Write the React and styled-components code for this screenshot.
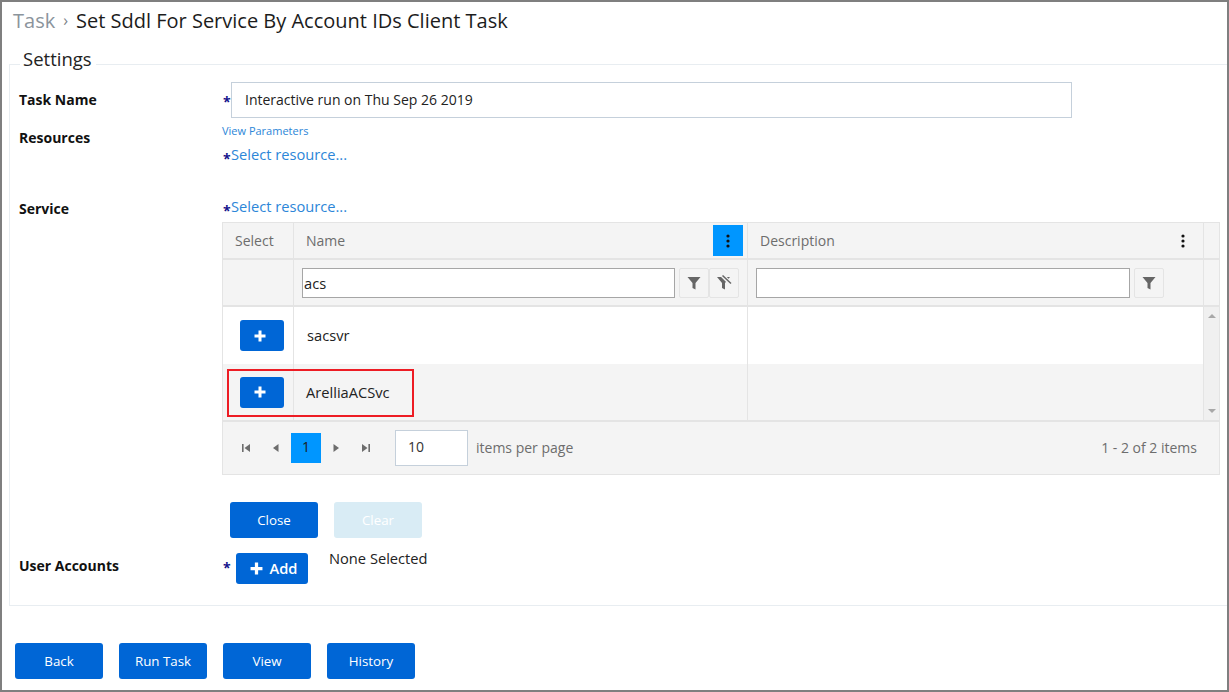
import React from "react";
import styled, { createGlobalStyle } from "styled-components";

const GlobalStyle = createGlobalStyle`
  html, body {
    margin: 0;
    padding: 0;
    background: #fff;
    font-family: "Open Sans", "Liberation Sans", sans-serif;
  }
`;

const Frame = styled.div`
  width: 1229px;
  height: 692px;
  box-sizing: border-box;
  border: 2px solid #7f7f7f;
  overflow: hidden;
  color: #1c1c1c;
`;

const TitleBar = styled.div`
  display: flex;
  align-items: center;
  height: 36px;
  padding-left: 11px;
  font-size: 20px;
`;

const Crumb = styled.span`
  color: #8b949c;
`;

const CrumbSep = styled.span`
  color: #7b8288;
  font-size: 16px;
  margin: 0 8px 0 8px;
`;

const Settings = styled.fieldset`
  margin: 20px 0 0 7px;
  padding: 0 9px 21px 9px;
  width: 1218px;
  height: 548px;
  box-sizing: border-box;
  border: 1px solid #e8edf1;
  border-right: none;
`;

const SettingsTitle = styled.legend`
  margin-left: 1px;
  padding: 0 4px 0 3px;
  height: 12px;
  font-size: 18.5px;
  line-height: 12px;
  color: #222;
  transform: translateY(-5px);
`;

const FormRow = styled.div`
  display: grid;
  grid-template-columns: 203px 1fr;
  margin-top: ${(p) => p.$top || 0}px;
  height: ${(p) => (p.$height ? p.$height + "px" : "auto")};
`;

const Label = styled.label`
  font-size: 14px;
  font-weight: 700;
  line-height: 19px;
  padding-top: ${(p) => p.$pad || 0}px;
  color: #111;
`;

const Star = styled.span`
  color: #14148c;
  font-size: 14px;
  font-weight: 700;
  line-height: 16px;
  display: inline-block;
  width: ${(p) => p.$w || 9}px;
  padding-left: 1px;
  box-sizing: border-box;
  transform: translateY(${(p) => p.$shift || 0}px);
`;

const NameLine = styled.div`
  display: flex;
  align-items: center;
`;

const TextBox = styled.div`
  width: 841px;
  height: 36px;
  box-sizing: border-box;
  border: 1px solid #c5d0db;
  padding-left: 13px;
  font-size: 14px;
  line-height: 34px;
  color: #222;
`;

const SmallLink = styled.a`
  display: block;
  font-size: 11px;
  line-height: 14px;
  color: #2c86d8;
  margin-top: 6px;
`;

const ResourceLine = styled.div`
  display: flex;
  align-items: center;
  height: 18px;
  margin-top: ${(p) => p.$top || 0}px;
`;

const ResourceLink = styled.a`
  font-size: 14.67px;
  line-height: 18px;
  color: #2c86d8;
`;

const Grid = styled.div`
  position: relative;
  width: 998px;
  height: 253px;
  margin-top: 7px;
  box-sizing: border-box;
  border: 1px solid #e4e4e4;
  background: #f4f4f4;
`;

const GridRow = styled.div`
  display: grid;
  grid-template-columns: 71px 454px 456px 15px;
  height: ${(p) => p.$height}px;
  box-sizing: border-box;
  border-bottom: ${(p) => (p.$line ? "2px solid #e4e4e4" : "none")};
  background: ${(p) => p.$bg || "#f4f4f4"};
`;

const Cell = styled.div`
  display: flex;
  align-items: center;
  box-sizing: border-box;
  border-right: 1px solid #e4e4e4;
  padding-left: ${(p) => p.$pad || 0}px;
  padding-bottom: ${(p) => p.$lift || 0}px;
  font-size: ${(p) => p.$size || 14.67}px;
  color: ${(p) => p.$color || "#222"};
`;

const HeadText = styled.span`
  flex: 1;
`;

const MenuButton = styled.button`
  width: 30px;
  height: 31px;
  margin-right: ${(p) => p.$right || 4}px;
  border: none;
  padding: 0;
  display: flex;
  align-items: center;
  justify-content: center;
  background: ${(p) => (p.$active ? "#0096ff" : "transparent")};
`;

const FilterInput = styled.div`
  width: ${(p) => p.$w}px;
  height: 30px;
  box-sizing: border-box;
  border: 1px solid #a6a6a6;
  background: #fff;
  font-size: 14.67px;
  line-height: 28px;
  padding-left: 1px;
  color: #222;
`;

const FilterButton = styled.button`
  width: 30px;
  height: 30px;
  margin-left: ${(p) => p.$gap || 0}px;
  box-sizing: border-box;
  padding: 0;
  border: 1px solid #e4e4e4;
  border-radius: 2px;
  background: #f4f4f4;
  display: flex;
  align-items: center;
  justify-content: center;
`;

const ScrollTrack = styled.div`
  display: flex;
  align-items: ${(p) => (p.$bottom ? "flex-end" : "flex-start")};
  justify-content: center;
  padding: ${(p) => (p.$bottom ? "0 0 6px 0" : "6px 0 0 0")};
  background: #f0f0f0;
`;

const PlusButton = styled.button`
  width: 44px;
  height: 31px;
  border: none;
  padding: 0 4px 0 0;
  border-radius: 3px;
  background: #0066d6;
  display: flex;
  align-items: center;
  justify-content: center;
`;

const Pager = styled.div`
  display: flex;
  align-items: center;
  height: 52px;
  padding-left: 8px;
  padding-right: 22px;
  font-size: 14px;
  color: #6d6d6d;
`;

const PageIcon = styled.span`
  width: 30px;
  height: 30px;
  display: flex;
  align-items: center;
  justify-content: center;
`;

const PageNumber = styled.span`
  width: 30px;
  height: 30px;
  background: #0096ff;
  color: #1c1c1c;
  text-align: center;
  line-height: 28px;
`;

const PageSize = styled.div`
  width: 73px;
  height: 36px;
  margin-left: 14px;
  box-sizing: border-box;
  border: 1px solid #c5d0db;
  background: #fff;
  padding-left: 12px;
  line-height: 32px;
  color: #333;
`;

const PagerText = styled.span`
  margin-left: 8px;
  padding-bottom: 2px;
`;

const PagerCount = styled.span`
  margin-left: auto;
  padding-bottom: 2px;
`;

const Highlight = styled.div`
  position: absolute;
  left: 4px;
  top: 146px;
  width: 187px;
  height: 48px;
  box-sizing: border-box;
  border: 2px solid #ed1c24;
`;

const ActionRow = styled.div`
  display: flex;
  gap: ${(p) => p.$gap}px;
  margin-top: ${(p) => p.$top}px;
  margin-left: ${(p) => p.$left}px;
`;

const ActionButton = styled.button`
  width: 88px;
  height: 36px;
  border: none;
  border-radius: 3px;
  padding: 0;
  font-family: inherit;
  font-size: 13.33px;
  font-weight: 400;
  color: #fff;
  background: ${(p) => (p.$disabled ? "#d9ecf5" : "#0066d6")};
`;

const AddLine = styled.div`
  display: flex;
  align-items: flex-start;
`;

const AddButton = styled.button`
  width: 72px;
  height: 31px;
  border: none;
  border-radius: 3px;
  padding: 0 0 0 3px;
  display: flex;
  align-items: center;
  justify-content: center;
  gap: 7px;
  background: #0066d6;
  color: #fff;
  font-family: inherit;
  font-size: 14.67px;
  font-weight: 600;
`;

const AddText = styled.span`
  padding-bottom: 2px;
`;

const NoneSelected = styled.span`
  margin-left: 21px;
  font-size: 14.67px;
  line-height: 19px;
  margin-top: -4px;
  color: #222;
`;

const Plus = ({ size = 12 }) => (
  <svg width={size} height={size} viewBox="0 0 12 12">
    <path d="M4.5 0.5h3v4h4v3h-4v4h-3v-4h-4v-3h4z" fill="#fff" />
  </svg>
);

const Dots = () => (
  <svg width="4" height="14" viewBox="0 0 4 14">
    <circle cx="2" cy="2" r="1.6" fill="#111" />
    <circle cx="2" cy="7" r="1.6" fill="#111" />
    <circle cx="2" cy="12" r="1.6" fill="#111" />
  </svg>
);

const Funnel = () => (
  <svg width="14" height="14" viewBox="0 0 14 14">
    <path d="M0.5 1h13L8.5 7v6.5l-3-1.5V7z" fill="#666" />
  </svg>
);

// same funnel, cut by a diagonal from its top left corner
const FunnelClear = () => (
  <svg width="16" height="15" viewBox="0 0 16 15">
    <path d="M1 2h13L9 8v6.5l-3-1.5V8z" fill="#666" />
    <path d="M5 -1l10 10" stroke="#f4f4f4" strokeWidth="4" fill="none" />
    <path d="M6.5 0.5l8.5 8" stroke="#666" strokeWidth="1.5" fill="none" />
  </svg>
);

const Seek = ({ dir, end }) => (
  <svg width="10" height="10" viewBox="0 0 10 10">
    <g transform={dir === "left" ? "" : "translate(10 0) scale(-1 1)"}>
      <path d={end ? "M9 1v8L3.5 5z" : "M7.5 1v8L2 5z"} fill="#6d6d6d" />
      {end && <rect x="1" y="1" width="1.6" height="8" fill="#6d6d6d" />}
    </g>
  </svg>
);

const Caret = ({ up }) => (
  <svg width="10" height="6" viewBox="0 0 10 6">
    <path d={up ? "M5 1l4 4H1z" : "M5 5L1 1h8z"} fill="#a8a8a8" />
  </svg>
);

const App = () => (
  <Frame>
    <GlobalStyle />
    <TitleBar>
      <Crumb>Task</Crumb>
      <CrumbSep>›</CrumbSep>
      <span>Set Sddl For Service By Account IDs Client Task</span>
    </TitleBar>

    <Settings>
      <SettingsTitle>Settings</SettingsTitle>

      <FormRow $top={12} $height={36}>
        <Label $pad={8}>Task Name</Label>
        <NameLine>
          <Star $shift={2}>*</Star>
          <TextBox>Interactive run on Thu Sep 26 2019</TextBox>
        </NameLine>
      </FormRow>

      <FormRow $height={79}>
        <Label $pad={10}>Resources</Label>
        <div>
          <SmallLink>View Parameters</SmallLink>
          <ResourceLine $top={7}>
            <Star $shift={5}>*</Star>
            <ResourceLink>Select resource...</ResourceLink>
          </ResourceLine>
        </div>
      </FormRow>

      <FormRow>
        <Label $pad={2}>Service</Label>
        <div>
          <ResourceLine>
            <Star $shift={5}>*</Star>
            <ResourceLink>Select resource...</ResourceLink>
          </ResourceLine>
          <Grid>
            <GridRow $height={37} $line>
              <Cell $pad={12} $size={14} $color="#6d6d6d">Select</Cell>
              <Cell $pad={12} $size={14} $color="#6d6d6d">
                <HeadText>Name</HeadText>
                <MenuButton $active><Dots /></MenuButton>
              </Cell>
              <Cell $pad={12} $size={14} $color="#6d6d6d">
                <HeadText>Description</HeadText>
                <MenuButton $right={5}><Dots /></MenuButton>
              </Cell>
              <div />
            </GridRow>
            <GridRow $height={47} $line>
              <Cell />
              <Cell $pad={8}>
                <FilterInput $w={373}>acs</FilterInput>
                <FilterButton $gap={4}><Funnel /></FilterButton>
                <FilterButton><FunnelClear /></FilterButton>
              </Cell>
              <Cell $pad={8}>
                <FilterInput $w={374} />
                <FilterButton $gap={4}><Funnel /></FilterButton>
              </Cell>
              <div />
            </GridRow>
            <GridRow $height={57} $bg="#fff">
              <Cell $pad={17}><PlusButton><Plus /></PlusButton></Cell>
              <Cell $pad={13} $lift={2}>sacsvr</Cell>
              <Cell />
              <ScrollTrack><Caret up /></ScrollTrack>
            </GridRow>
            <GridRow $height={58} $line>
              <Cell $pad={17}><PlusButton><Plus /></PlusButton></Cell>
              <Cell $pad={12}>ArelliaACSvc</Cell>
              <Cell />
              <ScrollTrack $bottom><Caret /></ScrollTrack>
            </GridRow>
            <Pager>
              <PageIcon><Seek dir="left" end /></PageIcon>
              <PageIcon><Seek dir="left" /></PageIcon>
              <PageNumber>1</PageNumber>
              <PageIcon><Seek dir="right" /></PageIcon>
              <PageIcon><Seek dir="right" end /></PageIcon>
              <PageSize>10</PageSize>
              <PagerText>items per page</PagerText>
              <PagerCount>1 - 2 of 2 items</PagerCount>
            </Pager>
            <Highlight />
          </Grid>
          <ActionRow $gap={16} $top={27} $left={8}>
            <ActionButton>Close</ActionButton>
            <ActionButton $disabled>Clear</ActionButton>
          </ActionRow>
        </div>
      </FormRow>

      <FormRow $top={15}>
        <Label $pad={3}>User Accounts</Label>
        <AddLine>
          <Star $w={14} $shift={7}>*</Star>
          <AddButton><Plus size={13} /><AddText>Add</AddText></AddButton>
          <NoneSelected>None Selected</NoneSelected>
        </AddLine>
      </FormRow>
    </Settings>

    <ActionRow $gap={16} $top={37} $left={13}>
      <ActionButton>Back</ActionButton>
      <ActionButton>Run Task</ActionButton>
      <ActionButton>View</ActionButton>
      <ActionButton>History</ActionButton>
    </ActionRow>
  </Frame>
);

export default App;
